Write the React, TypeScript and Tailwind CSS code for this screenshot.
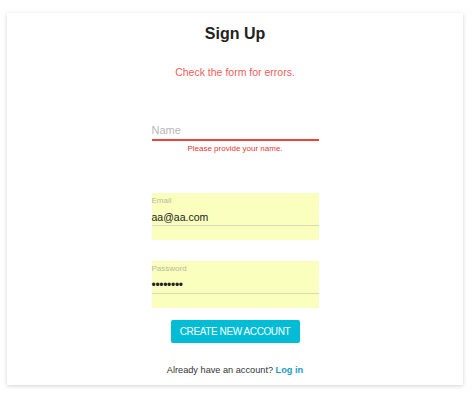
export default function App() {
  return (
    <div className="w-[474px] h-[395px] bg-white pt-[13px] px-[7px] font-['Liberation_Sans',Arial,sans-serif]">
      <div className="w-[456px] h-[372px] bg-white shadow-[0_1px_4px_rgba(0,0,0,0.18)] flex flex-col items-center">
        <h1 className="shrink-0 mt-[9px] h-[24px] leading-[24px] text-[16px] font-bold text-[#222]">Sign Up</h1>
        <p className="shrink-0 mt-[18px] h-[16px] leading-[16px] text-[10.5px] text-[#f0605a]">Check the form for errors.</p>
        <div className="shrink-0 mt-[41px] w-[167px] flex flex-col">
          <div className="h-[20px] border-b-2 border-[#f44336] text-[11px] leading-[18px] text-[#b8b8b8]">Name</div>
          <p className="mt-[2px] h-[12px] leading-[12px] text-[8px] text-center text-[#e53935]">Please provide your name.</p>
        </div>
        <div className="shrink-0 mt-[38px] w-[167px] h-[47px] bg-[#faffbd] flex flex-col">
          <span className="mt-[3px] h-[10px] leading-[10px] text-[8px] text-[#b9b9a0]">Email</span>
          <span className="mt-[3px] h-[17px] leading-[17px] text-[10.5px] text-[#222] border-b border-[#d9d9c0]">aa@aa.com</span>
        </div>
        <div className="shrink-0 mt-[21px] w-[167px] h-[47px] bg-[#faffbd] flex flex-col">
          <span className="mt-[3px] h-[10px] leading-[10px] text-[8px] text-[#b9b9a0]">Password</span>
          <span className="mt-[3px] h-[17px] leading-[17px] text-[12px] text-[#222] border-b border-[#d9d9c0] tracking-[-0.3px]">••••••••</span>
        </div>
        <button className="shrink-0 mt-[12px] w-[129px] h-[23px] bg-[#00bcd4] text-white text-[10px] tracking-[-0.4px] leading-[23px] whitespace-nowrap rounded-[2px]">CREATE NEW ACCOUNT</button>
        <p className="shrink-0 mt-[20px] h-[14px] leading-[14px] text-[9.2px] text-[#333]">
          Already have an account? <span className="font-bold text-[#1a9ec0]">Log in</span>
        </p>
      </div>
    </div>
  );
}
